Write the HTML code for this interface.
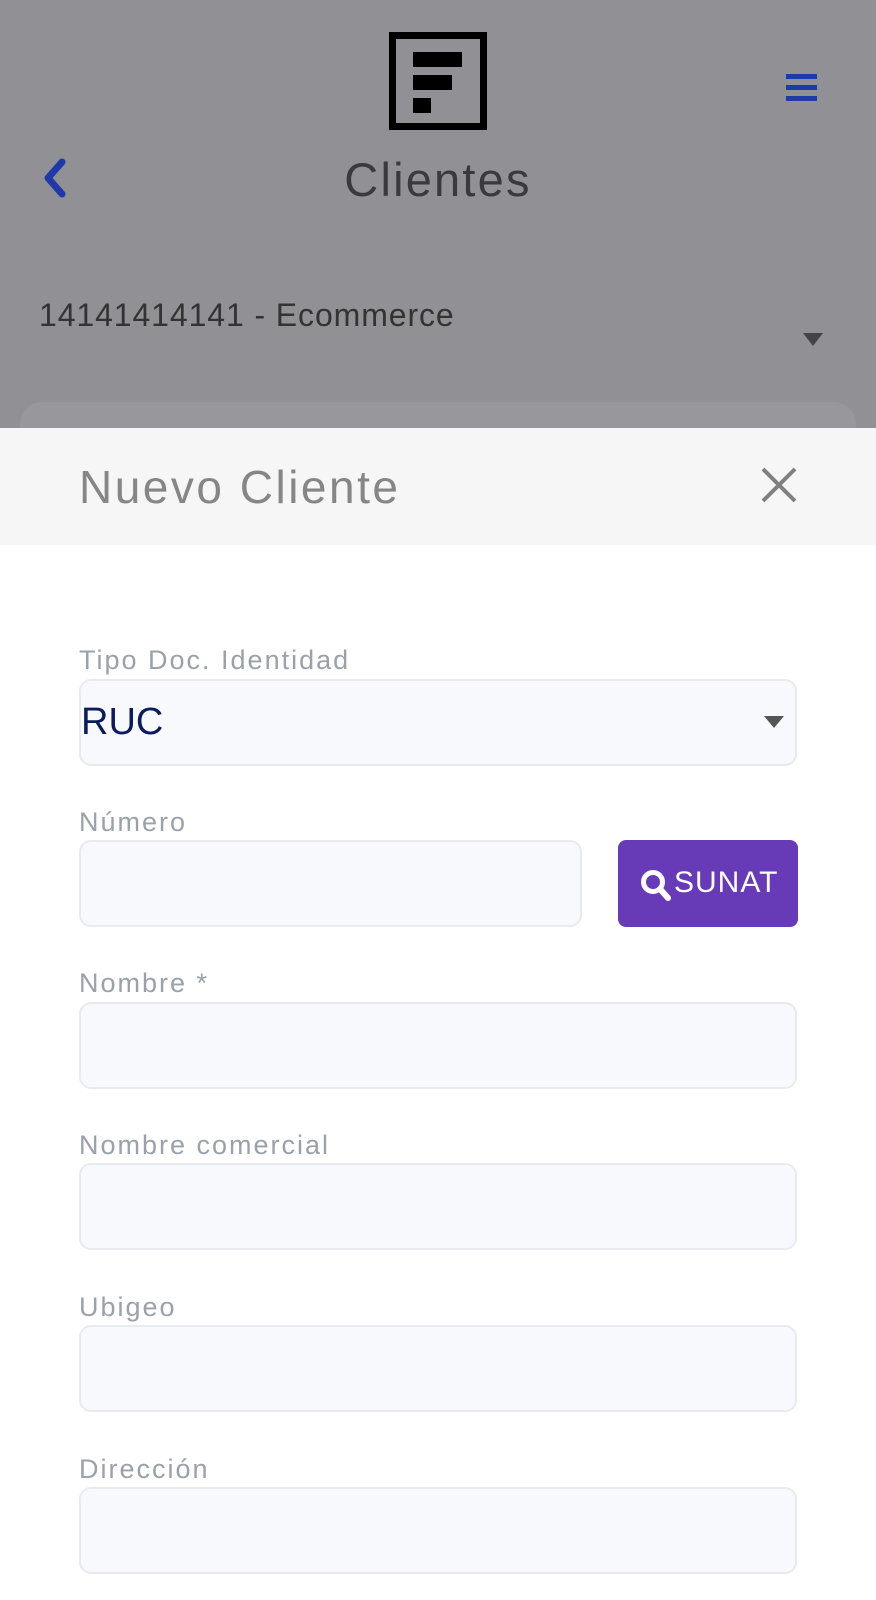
<!DOCTYPE html>
<html><head><meta charset="utf-8"><style>
*{margin:0;padding:0;box-sizing:border-box}
body{width:876px;height:1600px;background:#fff;font-family:"Liberation Sans",sans-serif;position:relative;overflow:hidden}
.top{position:absolute;left:0;top:0;width:876px;height:428px;background:#909095}
.card{position:absolute;left:20px;top:402px;width:836px;height:60px;background:#98989c;border-radius:22px}
.abs{position:absolute}
.head{position:absolute;left:0;top:428px;width:876px;height:117px;background:#f6f6f6}
.lbl{position:absolute;left:79px;font-size:27px;color:#9ba1aa;line-height:30px;letter-spacing:2px}
.inp{position:absolute;left:79px;width:718px;height:87px;background:#f8f9fc;border:2px solid #e8eaf0;border-radius:12px}
</style></head><body>
<div class="top"></div>
<div class="card"></div>
<div class="abs" style="left:389px;top:32px;width:98px;height:98px;border:7px solid #000"></div>
<div class="abs" style="left:413px;top:52px;width:49px;height:15px;background:#000"></div>
<div class="abs" style="left:413px;top:75px;width:39px;height:15px;background:#000"></div>
<div class="abs" style="left:413px;top:98px;width:18px;height:15px;background:#000"></div>
<div class="abs" style="left:786px;top:74px;width:31px;height:5px;background:#1f3aa8"></div>
<div class="abs" style="left:786px;top:85px;width:31px;height:5px;background:#1f3aa8"></div>
<div class="abs" style="left:786px;top:96px;width:31px;height:5px;background:#1f3aa8"></div>
<svg class="abs" style="left:38px;top:158px" width="32" height="40"><path d="M24 4 L10 20 L24 36" stroke="#1f3aa8" stroke-width="7" fill="none" stroke-linecap="round" stroke-linejoin="round"/></svg>
<div class="abs" style="left:0;width:876px;top:152px;text-align:center;font-size:47px;color:#3a3a3e;line-height:56px;letter-spacing:2.2px">Clientes</div>
<div class="abs" style="left:39px;top:296px;font-size:32px;color:#333;line-height:38px;letter-spacing:0.9px">14141414141 - Ecommerce</div>
<svg class="abs" style="left:803px;top:333px" width="20" height="14"><path d="M0 0H20L10 13Z" fill="#444"/></svg>
<div class="head"></div>
<div class="abs" style="left:79px;top:459px;font-size:46px;color:#868686;line-height:56px;letter-spacing:2.5px">Nuevo Cliente</div>
<svg class="abs" style="left:760px;top:466px" width="38" height="38"><path d="M3 3L35 35M35 3L3 35" stroke="#808080" stroke-width="4"/></svg>
<div class="lbl" style="top:645px">Tipo Doc. Identidad</div>
<div class="inp" style="top:679px"></div>
<div class="abs" style="left:81px;top:700px;font-size:38px;color:#0d1b5e;line-height:44px">RUC</div>
<svg class="abs" style="left:764px;top:716px" width="20" height="13"><path d="M0 0H20L10 12Z" fill="#555"/></svg>
<div class="lbl" style="top:807px">Número</div>
<div class="inp" style="top:840px;width:503px"></div>
<div class="abs" style="left:618px;top:840px;width:180px;height:87px;background:#673ab7;border-radius:8px"></div>
<svg class="abs" style="left:640px;top:869px" width="32" height="34"><circle cx="13" cy="13" r="9.5" stroke="#fff" stroke-width="5" fill="none"/><path d="M20 20L28 29" stroke="#fff" stroke-width="6" stroke-linecap="round"/></svg>
<div class="abs" style="left:674px;top:866px;font-size:30px;color:#fff;line-height:34px;letter-spacing:1px">SUNAT</div>
<div class="lbl" style="top:968px">Nombre *</div>
<div class="inp" style="top:1002px"></div>
<div class="lbl" style="top:1130px">Nombre comercial</div>
<div class="inp" style="top:1163px"></div>
<div class="lbl" style="top:1292px">Ubigeo</div>
<div class="inp" style="top:1325px"></div>
<div class="lbl" style="top:1454px">Dirección</div>
<div class="inp" style="top:1487px"></div>
</body></html>
